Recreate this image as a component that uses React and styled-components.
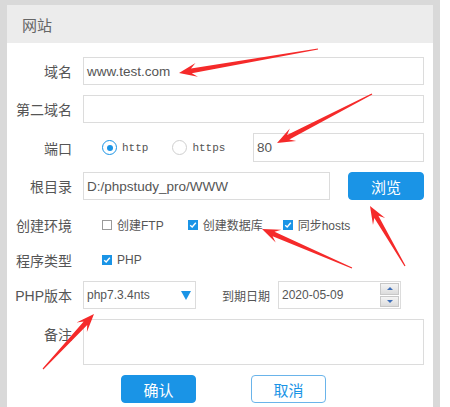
import React from 'react';
import styled, { createGlobalStyle } from 'styled-components';

const GlobalStyle = createGlobalStyle`
  html, body {
    margin: 0;
    padding: 0;
    background: #fff;
  }
  body {
    font-family: 'Liberation Sans', 'Noto Sans CJK SC', sans-serif;
  }
`;

const BLUE = '#1a94e6';

const Page = styled.div`
  position: relative;
  width: 450px;
  height: 407px;
  overflow: hidden;
`;

const Frame = styled.div`
  width: 440px;
  height: 407px;
  box-sizing: border-box;
  padding: 5px 7px 0 7px;
  background: #d9d9d9;
`;

const Dialog = styled.div`
  height: 100%;
  background: #fff;
  display: flex;
  flex-direction: column;
`;

const Header = styled.div`
  height: 38px;
  flex-shrink: 0;
  background: #ececec;
  display: flex;
  align-items: center;
  padding-left: 15px;
  font-size: 15px;
  color: #666;
`;

const Form = styled.div`
  display: grid;
  grid-template-columns: 55px 1fr;
  grid-template-rows: 28px 28px 29px 28px 29px 22px 28px 46px 28px;
  column-gap: 11px;
  row-gap: 10px;
  padding: 14px 9px 0 10px;
`;

const Label = styled.div`
  font-size: 14px;
  color: #555;
  text-align: right;
  white-space: nowrap;
  display: flex;
  justify-content: flex-end;
  align-items: ${p => (p.$top ? 'flex-start' : 'center')};
  padding-top: ${p => (p.$top ? '5px' : '0')};
`;

const Field = styled.div`
  display: flex;
  align-items: center;
  min-width: 0;
`;

const Input = styled.div`
  box-sizing: border-box;
  height: ${p => p.$h || '28px'};
  width: ${p => p.$w || '100%'};
  flex-shrink: 0;
  border: 1px solid #dcdcdc;
  background: #fff;
  display: flex;
  align-items: center;
  padding-left: 3px;
  font-size: ${p => p.$fs || '13.5px'};
  color: #555;
  margin-left: ${p => p.$ml || '0'};
`;

const RadioDot = styled.span`
  box-sizing: border-box;
  width: 15px;
  height: 15px;
  border-radius: 50%;
  border: 1.5px solid ${p => (p.$on ? BLUE : '#cfcfcf')};
  display: inline-flex;
  align-items: center;
  justify-content: center;
  margin-left: ${p => p.$ml};
  &::after {
    content: '';
    width: 6px;
    height: 6px;
    border-radius: 50%;
    background: ${p => (p.$on ? BLUE : 'transparent')};
  }
`;

const RadioText = styled.span`
  font-family: 'Liberation Mono', 'DejaVu Sans Mono', monospace;
  font-size: 11px;
  color: #555;
  margin-left: 5px;
`;

const Check = styled.span`
  box-sizing: border-box;
  width: 10px;
  height: 10px;
  flex-shrink: 0;
  border: 1px solid ${p => (p.$on ? BLUE : '#9a9a9a')};
  background: ${p => (p.$on ? BLUE : '#fff')};
  display: inline-flex;
  align-items: center;
  justify-content: center;
  margin-left: ${p => p.$ml};
`;

const CheckText = styled.span`
  font-size: 12px;
  color: #555;
  margin-left: 5px;
  white-space: nowrap;
`;

const Button = styled.div`
  box-sizing: border-box;
  width: ${p => p.$w || '75px'};
  height: 28px;
  flex-shrink: 0;
  border-radius: 4px;
  display: flex;
  align-items: center;
  justify-content: center;
  font-size: 15px;
  background: ${p => (p.$ghost ? '#fff' : BLUE)};
  color: ${p => (p.$ghost ? BLUE : '#fff')};
  border: 1.5px solid ${p => (p.$ghost ? '#6ab4ea' : BLUE)};
  margin-left: ${p => p.$ml || '0'};
`;

const SelectBox = styled(Input)`
  justify-content: space-between;
  padding-right: 4px;
`;

const Caret = styled.span`
  width: 0;
  height: 0;
  border-left: 5px solid transparent;
  border-right: 5px solid transparent;
  border-top: 9px solid ${BLUE};
`;

const DateLabel = styled.span`
  font-size: 12px;
  color: #555;
  margin-left: 26px;
  margin-right: 8px;
  white-space: nowrap;
`;

const DateBox = styled(Input)`
  justify-content: space-between;
  padding-right: 1px;
`;

const Spinner = styled.div`
  display: flex;
  flex-direction: column;
  width: 19px;
  height: 24px;
  gap: 1px;
`;

const SpinBtn = styled.div`
  flex: 1;
  background: linear-gradient(#f4f4f4, #dcdcdc);
  border: 1px solid #c8c8c8;
  display: flex;
  align-items: center;
  justify-content: center;
  &::after {
    content: '';
    border-left: 3px solid transparent;
    border-right: 3px solid transparent;
    ${p => (p.$down ? `border-top: 3px solid #3f6fb8;` : `border-bottom: 3px solid #3f6fb8;`)}
  }
`;

const Actions = styled.div`
  grid-column: 1 / -1;
  display: flex;
  justify-content: center;
  padding-left: 6px;
  gap: 55px;
`;

const Overlay = styled.svg`
  position: absolute;
  left: 0;
  top: 0;
  pointer-events: none;
`;

const Tick = () => (
  <svg width="8" height="8" viewBox="0 0 8 8">
    <path d="M1.2 4.2 L3.2 6 L6.8 1.8" fill="none" stroke="#fff" strokeWidth="1.4" />
  </svg>
);

// red callout arrows drawn on top of the dialog
const arrowPoints = ([x1, y1], [x2, y2], head = 18, half = 7) => {
  const len = Math.hypot(x2 - x1, y2 - y1);
  const dx = (x2 - x1) / len;
  const dy = (y2 - y1) / len;
  const nx = -dy;
  const ny = dx;
  const at = (back, side) => [x2 - dx * back + nx * side, y2 - dy * back + ny * side];
  const tail = (side) => [x1 + nx * side, y1 + ny * side];
  const pts = [
    tail(0.6),
    at(head * 0.7, 2.4),
    at(head, half),
    [x2, y2],
    at(head, -half),
    at(head * 0.7, -2.4),
    tail(-0.6),
  ];
  return pts.map(p => p.map(v => v.toFixed(1)).join(',')).join(' ');
};

const arrows = [
  [[318, 49], [179, 73]],
  [[372, 94], [277, 143]],
  [[405, 266], [370, 206]],
  [[352, 268], [262, 229]],
  [[43, 369], [94, 314]],
];

const App = () => (
  <Page>
    <GlobalStyle />
    <Frame>
      <Dialog>
        <Header>网站</Header>
        <Form>
          <Label>域名</Label>
          <Field>
            <Input>www.test.com</Input>
          </Field>

          <Label>第二域名</Label>
          <Field>
            <Input />
          </Field>

          <Label>端口</Label>
          <Field>
            <RadioDot $on $ml="19px" />
            <RadioText>http</RadioText>
            <RadioDot $ml="24px" />
            <RadioText>https</RadioText>
            <Input $w="171px" $h="29px" $ml="auto">80</Input>
          </Field>

          <Label>根目录</Label>
          <Field>
            <Input $w="247px">D:/phpstudy_pro/WWW</Input>
            <Button $w="76px" $ml="auto">浏览</Button>
          </Field>

          <Label>创建环境</Label>
          <Field>
            <Check $ml="19px" />
            <CheckText>创建FTP</CheckText>
            <Check $on $ml="24px"><Tick /></Check>
            <CheckText>创建数据库</CheckText>
            <Check $on $ml="20px"><Tick /></Check>
            <CheckText>同步hosts</CheckText>
          </Field>

          <Label>程序类型</Label>
          <Field>
            <Check $on $ml="19px"><Tick /></Check>
            <CheckText>PHP</CheckText>
          </Field>

          <Label>PHP版本</Label>
          <Field>
            <SelectBox $w="113px" $fs="12px">
              php7.3.4nts
              <Caret />
            </SelectBox>
            <DateLabel>到期日期</DateLabel>
            <DateBox $w="123px" $fs="12px">
              2020-05-09
              <Spinner>
                <SpinBtn />
                <SpinBtn $down />
              </Spinner>
            </DateBox>
          </Field>

          <Label $top>备注</Label>
          <Field>
            <Input $h="46px" />
          </Field>

          <Actions>
            <Button>确认</Button>
            <Button $ghost>取消</Button>
          </Actions>
        </Form>
      </Dialog>
    </Frame>
    <Overlay width="450" height="407" viewBox="0 0 450 407">
      {arrows.map(([from, to], i) => (
        <polygon key={i} points={arrowPoints(from, to)} fill="#f52a2a" />
      ))}
    </Overlay>
  </Page>
);

export default App;
